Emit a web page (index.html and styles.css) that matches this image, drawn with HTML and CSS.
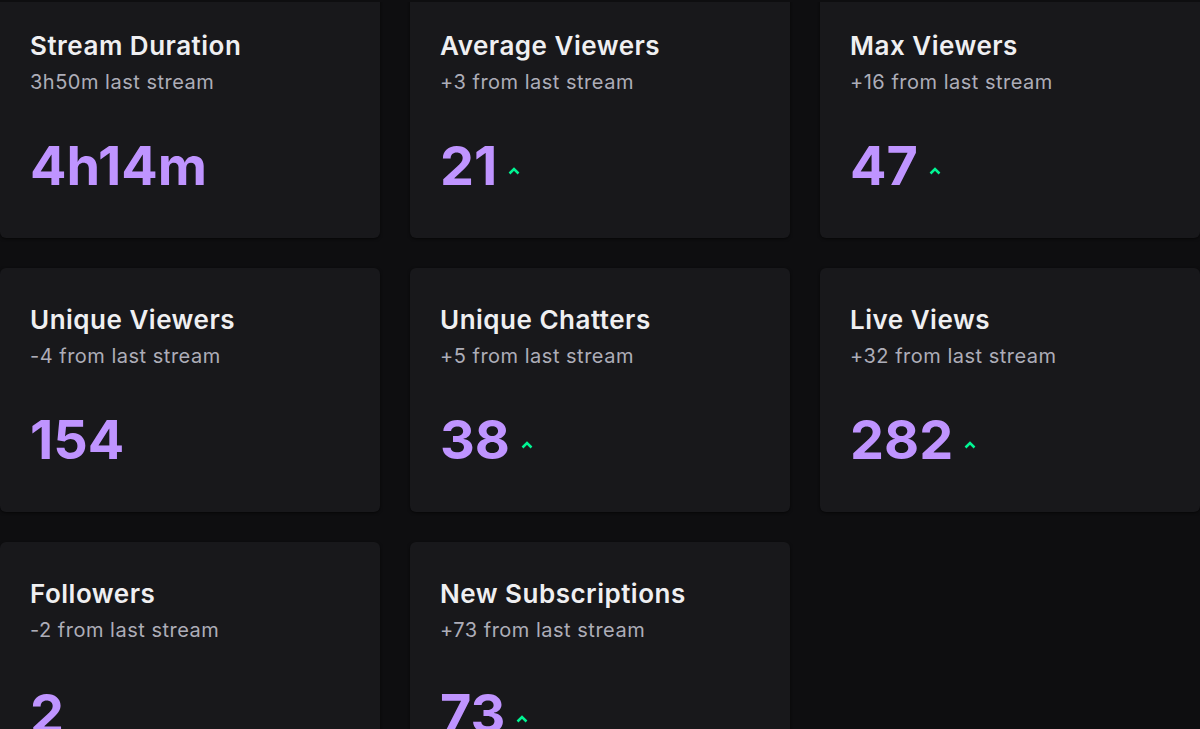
FILE: index.html
```html
<!DOCTYPE html>
<html lang="en">
<head>
    <meta charset="UTF-8">
    <meta name="viewport" content="width=device-width, initial-scale=1.0">
    <title>Stream Summary</title>
    <link rel="stylesheet" href="styles.css">
</head>
<body>

    <div class="scroll-area">
        <div class="stats-grid">

            <div class="stat-card">
                <h3>Stream Duration</h3>
                <p class="compare">3h50m last stream</p>
                <div class="value">4h14m</div>
            </div>

            <div class="stat-card">
                <h3>Average Viewers</h3>
                <p class="compare">+3 from last stream</p>
                <div class="value">21
                    <svg class="trend" viewBox="0 0 12 8"><path d="M1.5 6.5 L6 2 L10.5 6.5"/></svg>
                </div>
            </div>

            <div class="stat-card">
                <h3>Max Viewers</h3>
                <p class="compare">+16 from last stream</p>
                <div class="value">47
                    <svg class="trend" viewBox="0 0 12 8"><path d="M1.5 6.5 L6 2 L10.5 6.5"/></svg>
                </div>
            </div>

            <div class="stat-card">
                <h3>Unique Viewers</h3>
                <p class="compare">-4 from last stream</p>
                <div class="value">154</div>
            </div>

            <div class="stat-card">
                <h3>Unique Chatters</h3>
                <p class="compare">+5 from last stream</p>
                <div class="value">38
                    <svg class="trend" viewBox="0 0 12 8"><path d="M1.5 6.5 L6 2 L10.5 6.5"/></svg>
                </div>
            </div>

            <div class="stat-card">
                <h3>Live Views</h3>
                <p class="compare">+32 from last stream</p>
                <div class="value">282
                    <svg class="trend" viewBox="0 0 12 8"><path d="M1.5 6.5 L6 2 L10.5 6.5"/></svg>
                </div>
            </div>

            <div class="stat-card">
                <h3>Followers</h3>
                <p class="compare">-2 from last stream</p>
                <div class="value">2</div>
            </div>

            <div class="stat-card">
                <h3>New Subscriptions</h3>
                <p class="compare">+73 from last stream</p>
                <div class="value">73
                    <svg class="trend" viewBox="0 0 12 8"><path d="M1.5 6.5 L6 2 L10.5 6.5"/></svg>
                </div>
            </div>

        </div>
    </div>

</body>
</html>
```

FILE: styles.css
```css
body {
    font-family: 'Inter', 'Noto Sans', sans-serif;
    margin: 0;
    padding: 0;
    background-color: #0e0e10;
    color: #efeff1;
}
.scroll-area {
    height: 729px;
    overflow: hidden;
    border-top: 2px solid #0e0e10;
    box-sizing: border-box;
}
.stats-grid {
    display: grid;
    grid-template-columns: repeat(3, 380px);
    grid-auto-rows: 244px;
    gap: 30px;
    margin-top: -8px;
}
.stat-card {
    background-color: #18181b;
    border-radius: 6px;
    padding: 36px 30px 0 30px;
    box-shadow: 0px 1px 3px rgba(0, 0, 0, 0.6);
}
.stat-card h3 {
    margin: 0;
    font-size: 26px;
    font-weight: 600;
    line-height: 32px;
    letter-spacing: 0.5px;
    color: #efeff1;
}
.stat-card .compare {
    margin: 8px 0 0 0;
    font-size: 20px;
    line-height: 24px;
    letter-spacing: 0.5px;
    color: #adadb8;
}
.value {
    display: flex;
    align-items: center;
    margin-top: 42px;
    font-size: 54px;
    font-weight: 700;
    line-height: 60px;
    color: #bf94ff;
}
.trend {
    width: 12px;
    height: 8px;
    margin-left: 11px;
    margin-top: 9px;
    fill: none;
    stroke: #00f593;
    stroke-width: 2.5;
}
```
